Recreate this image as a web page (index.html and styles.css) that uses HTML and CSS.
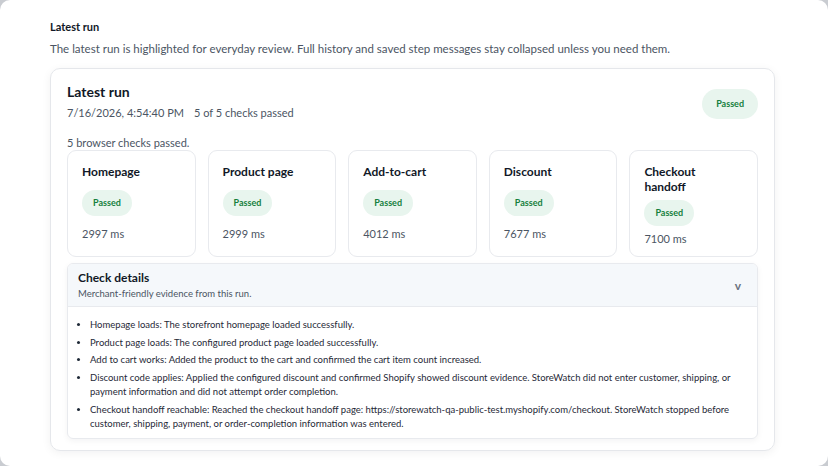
FILE: index.html
```html
<!DOCTYPE html>
<html lang="en">
<head>
    <meta charset="UTF-8">
    <meta name="viewport" content="width=device-width, initial-scale=1.0">
    <title>Latest run</title>
    <link rel="stylesheet" href="styles.css">
</head>
<body>
    <div class="page">
        <h2 class="section-title">Latest run</h2>
        <p class="section-desc">The latest run is highlighted for everyday review. Full history and saved step messages stay collapsed unless you need them.</p>

        <div class="run-card">
            <div class="run-head">
                <div>
                    <h3 class="run-title">Latest run</h3>
                    <div class="run-meta"><span>7/16/2026, 4:54:40 PM</span><span>5 of 5 checks passed</span></div>
                </div>
                <span class="badge badge-lg">Passed</span>
            </div>
            <p class="run-summary">5 browser checks passed.</p>

            <div class="checks">
                <div class="check">
                    <div class="check-name">Homepage</div>
                    <span class="badge">Passed</span>
                    <div class="check-time">2997 ms</div>
                </div>
                <div class="check">
                    <div class="check-name">Product page</div>
                    <span class="badge">Passed</span>
                    <div class="check-time">2999 ms</div>
                </div>
                <div class="check">
                    <div class="check-name">Add-to-cart</div>
                    <span class="badge">Passed</span>
                    <div class="check-time">4012 ms</div>
                </div>
                <div class="check">
                    <div class="check-name">Discount</div>
                    <span class="badge">Passed</span>
                    <div class="check-time">7677 ms</div>
                </div>
                <div class="check">
                    <div class="check-name">Checkout handoff</div>
                    <span class="badge">Passed</span>
                    <div class="check-time">7100 ms</div>
                </div>
            </div>

            <div class="details">
                <div class="details-head">
                    <div>
                        <div class="details-title">Check details</div>
                        <div class="details-sub">Merchant-friendly evidence from this run.</div>
                    </div>
                    <span class="chevron">v</span>
                </div>
                <ul class="details-list">
                    <li>Homepage loads: The storefront homepage loaded successfully.</li>
                    <li>Product page loads: The configured product page loaded successfully.</li>
                    <li>Add to cart works: Added the product to the cart and confirmed the cart item count increased.</li>
                    <li>Discount code applies: Applied the configured discount and confirmed Shopify showed discount evidence. StoreWatch did not enter customer, shipping, or payment information and did not attempt order completion.</li>
                    <li>Checkout handoff reachable: Reached the checkout handoff page: https://storewatch-qa-public-test.myshopify.com/checkout. StoreWatch stopped before customer, shipping, payment, or order-completion information was entered.</li>
                </ul>
            </div>
        </div>
    </div>
</body>
</html>
```

FILE: styles.css
```css
body {
    margin: 0;
    background-color: #c9ccd1;
    font-family: Lato, "Liberation Sans", sans-serif;
    color: #111827;
}
.page {
    height: 466px;
    box-sizing: border-box;
    background-color: #fff;
    border-radius: 10px;
    padding: 19px 53px 0 50px;
}
.section-title {
    margin: 0;
    font-size: 11px;
    font-weight: 700;
    line-height: 16px;
}
.section-desc {
    margin: 6px 0 0;
    font-size: 11.5px;
    line-height: 16px;
    color: #4b5563;
}
.run-card {
    margin-top: 11px;
    border: 1px solid #e5e7eb;
    border-radius: 10px;
    box-shadow: 0 2px 10px rgba(17, 24, 39, 0.06);
    padding: 13px 16px 11px;
}
.run-head {
    display: flex;
    justify-content: space-between;
    align-items: center;
    padding-top: 1px;
}
.run-title {
    margin: 0;
    font-size: 14px;
    font-weight: 700;
    line-height: 18px;
}
.run-meta {
    margin-top: 5px;
    display: flex;
    gap: 10px;
    font-size: 11px;
    line-height: 14px;
    color: #4b5563;
}
.run-summary {
    margin: 16px 0 0;
    font-size: 11px;
    line-height: 14px;
    color: #4b5563;
}
.badge {
    display: inline-block;
    align-self: flex-start;
    padding: 0 11px;
    height: 26px;
    line-height: 26px;
    border-radius: 13px;
    background-color: #e8f5ee;
    color: #15803d;
    font-size: 9px;
    font-weight: 700;
}
.badge-lg {
    align-self: center;
    height: 30px;
    line-height: 30px;
    border-radius: 15px;
    padding: 0 14px;
    margin-top: 5px;
}
.checks {
    display: grid;
    grid-template-columns: repeat(5, 1fr);
    gap: 12px;
}
.check {
    display: flex;
    flex-direction: column;
    gap: 6px;
    border: 1px solid #e8eaee;
    border-radius: 9px;
    padding: 13px 14px 10px;
}
.check .badge {
    margin-top: auto;
}
.check-name {
    font-size: 12px;
    font-weight: 700;
    line-height: 15px;
    width: 80px;
}
.check-time {
    margin: auto 0;
    font-size: 11px;
    line-height: 14px;
    color: #4b5563;
}
.details {
    margin-top: 6px;
    border: 1px solid #e8eaee;
    border-radius: 6px;
    box-shadow: 0 2px 6px rgba(17, 24, 39, 0.05);
    overflow: hidden;
}
.details-head {
    display: flex;
    justify-content: space-between;
    align-items: center;
    background-color: #f5f8fb;
    border-bottom: 1px solid #e8eaee;
    padding: 6px 16px 5px 10px;
}
.details-title {
    font-size: 12px;
    font-weight: 700;
    line-height: 15px;
}
.details-sub {
    margin-top: 2px;
    font-size: 9.5px;
    line-height: 14px;
    color: #4b5563;
}
.chevron {
    font-size: 12px;
    font-weight: 700;
    color: #6b7280;
}
.details-list {
    margin: 0;
    padding: 11px 20px 6px 22px;
    font-size: 9.5px;
    line-height: 14.5px;
    color: #1f2937;
}
.details-list li {
    margin-bottom: 3px;
}
.details-list li:last-child {
    margin-bottom: 0;
}
```
